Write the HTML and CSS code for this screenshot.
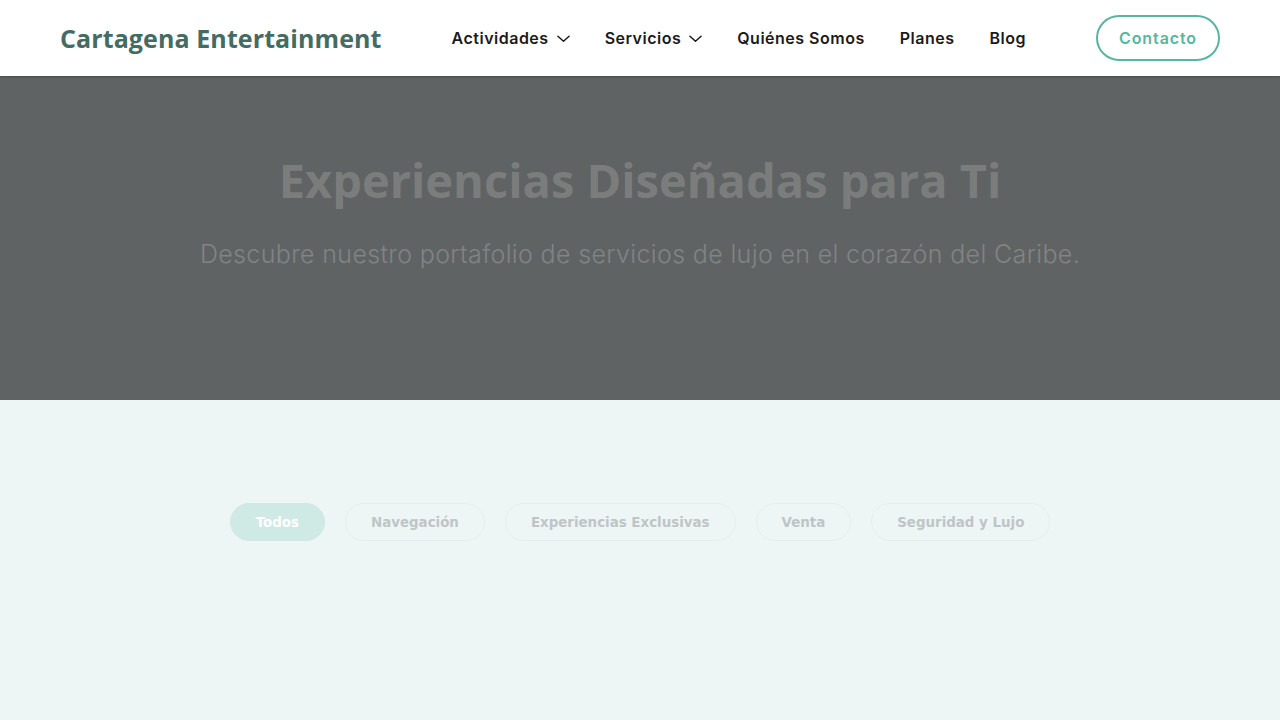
FILE: index.html
```html
<!DOCTYPE html>
<html lang="es">
<head>
<meta charset="utf-8">
<title>Cartagena Entertainment</title>
<link rel="stylesheet" href="styles.css">
</head>
<body>
<header class="header">
  <a class="logo" href="#">Cartagena Entertainment</a>
  <nav class="nav">
    <a class="nav-item" href="#">Actividades <svg class="chev" viewBox="0 0 14 8" width="13" height="8"><path d="M1 1l6 5.5L13 1" fill="none" stroke="currentColor" stroke-width="1.6" stroke-linecap="round" stroke-linejoin="round"/></svg></a>
    <a class="nav-item" href="#">Servicios <svg class="chev" viewBox="0 0 14 8" width="13" height="8"><path d="M1 1l6 5.5L13 1" fill="none" stroke="currentColor" stroke-width="1.6" stroke-linecap="round" stroke-linejoin="round"/></svg></a>
    <a class="nav-item" href="#">Quiénes Somos</a>
    <a class="nav-item" href="#">Planes</a>
    <a class="nav-item" href="#">Blog</a>
  </nav>
  <a class="btn-contact" href="#">Contacto</a>
</header>
<section class="hero">
  <h1 class="hero-title">Experiencias Diseñadas para Ti</h1>
  <p class="hero-sub">Descubre nuestro portafolio de servicios de lujo en el corazón del Caribe.</p>
</section>
<section class="catalog">
  <div class="filters">
    <button class="pill active">Todos</button>
    <button class="pill">Navegación</button>
    <button class="pill">Experiencias Exclusivas</button>
    <button class="pill">Venta</button>
    <button class="pill">Seguridad y Lujo</button>
  </div>
</section>
</body>
</html>
```
FILE: styles.css
```css
* { box-sizing: border-box; }
html, body { margin: 0; padding: 0; }
body {
  background: #eef6f5;
  font-family: "Open Sans", "DejaVu Sans", sans-serif;
  min-height: 720px;
}
.header {
  height: 76px;
  background: #ffffff;
  display: flex;
  align-items: center;
  padding: 0 60px;
  position: relative;
  z-index: 2;
  box-shadow: 0 1px 2px rgba(0,0,0,0.25);
}
.logo {
  font-family: "Open Sans", sans-serif;
  font-weight: 700;
  font-size: 25px;
  color: #456b62;
  text-decoration: none;
  letter-spacing: 0.1px;
}
.nav {
  display: flex;
  align-items: center;
  gap: 35px;
  margin-left: 70px;
}
.nav-item {
  font-family: "Inter", sans-serif;
  font-weight: 600;
  font-size: 16px;
  letter-spacing: 0.5px;
  color: #1b1b1b;
  text-decoration: none;
  display: flex;
  align-items: center;
  gap: 8px;
}
.chev { display: block; margin-top: 2px; }
.btn-contact {
  margin-left: auto;
  height: 46px;
  padding: 0 21px;
  border: 2px solid #58b5a2;
  border-radius: 23px;
  color: #58b5a2;
  font-family: "Inter", sans-serif;
  font-weight: 600;
  font-size: 16px;
  text-decoration: none;
  display: flex;
  align-items: center;
  letter-spacing: 0.9px;
}
.hero {
  height: 324px;
  background: #5f6364;
  display: flex;
  flex-direction: column;
  align-items: center;
  padding-top: 73px;
}
.hero-title {
  margin: 0;
  font-family: "Open Sans", sans-serif;
  font-weight: 700;
  font-size: 47px;
  line-height: 62px;
  color: #7b7d7d;
}
.hero-sub {
  margin: 27px 0 0;
  font-family: "Inter", sans-serif;
  font-weight: 300;
  font-size: 25px;
  line-height: 32px;
  letter-spacing: 0.35px;
  color: #818484;
}
.catalog {
  padding-top: 103px;
  display: flex;
  justify-content: center;
}
.filters {
  display: flex;
  gap: 20px;
}
.pill {
  height: 38px;
  padding: 0 25px;
  border-radius: 19px;
  border: 1px solid #e6efee;
  background: transparent;
  font-family: "DejaVu Sans", sans-serif;
  font-weight: 700;
  font-size: 13.4px;
  color: #bfc5c5;
  cursor: pointer;
}
.pill.active {
  background: #cfe9e4;
  border-color: #cfe9e4;
  color: #ffffff;
}
```
